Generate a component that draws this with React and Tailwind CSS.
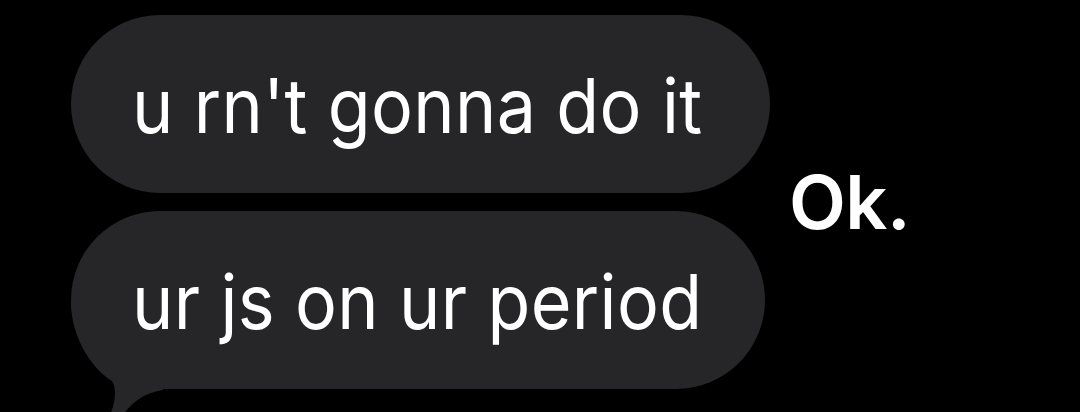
export default function App() {
  const bubbles = ['u rn\'t gonna do it', 'ur js on ur period']

  return (
    <div
      className="w-[1080px] h-[412px] bg-black overflow-hidden flex items-center pl-[71px] pb-[8px]"
      style={{ fontFamily: 'Inter, "Noto Sans", sans-serif' }}
    >
      <div className="flex flex-col gap-[18px]">
        {bubbles.map((text, i) => (
          <div
            key={i}
            className={`relative bg-[#262628] rounded-[90px] h-[178px] flex items-center pl-[61px] pt-[1px] ${i === 0 ? 'w-[699px]' : 'w-[694px]'}`}
          >
            <span className="relative z-10 origin-left scale-x-[0.92] text-white text-[76px] leading-none tracking-[0.4px] whitespace-nowrap">
              {text}
            </span>
            {i === 1 && (
              <svg
                className="absolute left-0 top-[80px]"
                width="100"
                height="130"
                viewBox="0 0 100 130"
              >
                <path d="M0 10 C 0 50 24 80 41 90 C 47 100 43 118 36 130 L 47 130 C 58 115 70 102 92 99 L 92 10 Z" fill="#262628" />
              </svg>
            )}
          </div>
        ))}
      </div>
      <span className="ml-[19px] text-white text-[74px] font-semibold leading-none tracking-[-0.5px]">
        Ok.
      </span>
    </div>
  )
}
